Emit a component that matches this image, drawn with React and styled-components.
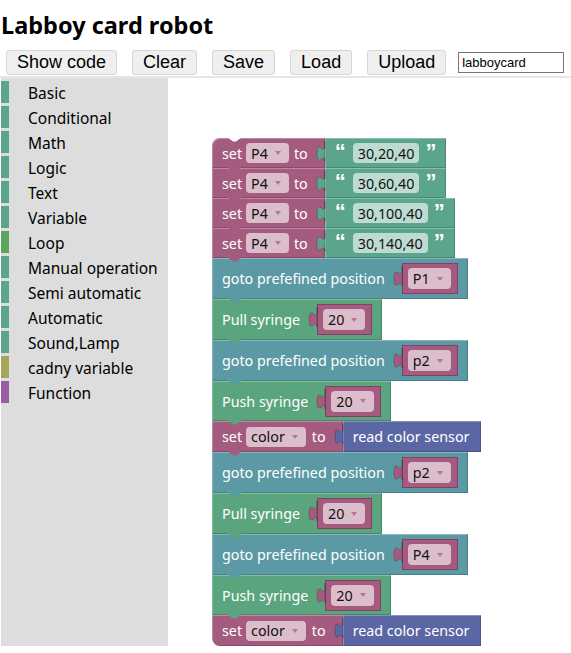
import React from "react";
import styled, { createGlobalStyle } from "styled-components";

const PINK = "#a55b80";
const TEXT_GREEN = "#5ba58c";
const ACTION_GREEN = "#5ba57e";
const TEAL = "#5b9aa5";
const BLUE = "#5b67a5";

const GlobalStyle = createGlobalStyle`
  html, body {
    margin: 0;
    padding: 0;
    background: #fff;
  }
  body {
    font-family: "Noto Sans", "Liberation Sans", sans-serif;
  }
`;

const Page = styled.div`
  width: 571px;
  height: 653px;
  overflow: hidden;
  display: flex;
  flex-direction: column;
`;

const Title = styled.h1`
  margin: 11px 0 0 1px;
  font-size: 23.5px;
  line-height: 29px;
  font-weight: 700;
  color: #000;
`;

const Toolbar = styled.div`
  display: flex;
  align-items: center;
  gap: 15px;
  margin-top: 10px;
  padding-left: 6px;
  height: 25px;
`;

const Button = styled.button`
  height: 25px;
  padding: 0 10px;
  font-family: "Liberation Sans", Arial, sans-serif;
  font-size: 18px;
  color: #000;
  background: #efefef;
  border: 1px solid #d6d6d6;
  border-radius: 3px;
`;

const NameInput = styled.input`
  width: 106px;
  height: 21px;
  box-sizing: border-box;
  margin-left: -3px;
  padding: 0 3px;
  font-family: "Liberation Sans", Arial, sans-serif;
  font-size: 13px;
  border: 1px solid #767676;
`;

const Workspace = styled.div`
  flex: 1;
  display: flex;
  margin-top: 1px;
  border-top: 2px solid #e6e6e6;
`;

const Toolbox = styled.div`
  width: 167px;
  height: 568px;
  margin-left: 1px;
  padding-top: 3px;
  box-sizing: border-box;
  background: #dddddd;
`;

const Category = styled.div`
  display: flex;
  height: 25px;
`;

const Swatch = styled.span`
  width: 8px;
  height: 22px;
  background: ${(p) => p.$c};
`;

const CategoryLabel = styled.span`
  margin: 1px 0 0 19px;
  font-size: 15.5px;
  line-height: 22px;
  color: #000;
`;

const Canvas = styled.div`
  flex: 1;
  padding: 60px 0 0 44px;
`;

const Stack = styled.div`
  display: flex;
  flex-direction: column;
  align-items: flex-start;
`;

const Row = styled.div`
  display: flex;
  height: ${(p) => p.$h}px;
`;

const Block = styled.div`
  position: relative;
  display: flex;
  align-items: center;
  box-sizing: border-box;
  height: 100%;
  padding: 0 ${(p) => p.$pr ?? 10}px 0 10px;
  background: ${(p) => p.$c};
  color: #fff;
  font-size: 14.3px;
  white-space: nowrap;
  box-shadow: inset 1px 1px 0 rgba(255, 255, 255, 0.28),
    inset -1px -1px 0 rgba(0, 0, 0, 0.18);
  border-top-left-radius: ${(p) => (p.$first ? 8 : 0)}px;
  border-bottom-left-radius: ${(p) => (p.$last ? 8 : 0)}px;
`;

const Word = styled.span`
  margin-right: ${(p) => p.$mr ?? 0}px;
`;

const Dropdown = styled.span`
  display: flex;
  align-items: center;
  height: ${(p) => p.$h ?? 20}px;
  padding: 0 8px 0 5px;
  margin-right: ${(p) => p.$mr ?? 0}px;
  border-radius: 4px;
  background: rgba(255, 255, 255, 0.6);
  color: #111;
`;

const Arrow = styled.span`
  width: 0;
  height: 0;
  margin-left: 7px;
  border-left: 3px solid transparent;
  border-right: 3px solid transparent;
  border-top: 4px solid #b07893;
`;

const Quote = styled.span`
  font-family: "Liberation Sans", Arial, sans-serif;
  font-size: 22px;
  font-weight: 700;
  line-height: 1;
  margin-top: -2px;
`;

const TextField = styled.span`
  display: flex;
  align-items: center;
  height: 20px;
  margin: 0 6px 0 7px;
  padding: 0 5px;
  border-radius: 4px;
  background: rgba(255, 255, 255, 0.6);
  color: #111;
`;

const Slot = styled.div`
  position: relative;
  display: flex;
  align-items: center;
  box-sizing: border-box;
  height: 31px;
  margin-left: 17px;
  padding: 0 6px 0 5px;
  background: ${PINK};
  border: 1px solid #7f4263;
`;

const TabSvg = styled.svg`
  position: absolute;
  left: ${(p) => p.$left ?? -8}px;
  top: ${(p) => p.$top ?? 3}px;
  overflow: visible;
`;

const NotchSvg = styled.svg`
  position: absolute;
  left: 15px;
  z-index: 2;
  ${(p) => (p.$top ? "top: -1px;" : "bottom: -4px;")}
`;

const Tab = ({ color, left, top }) => (
  <TabSvg width="8" height="20" viewBox="-8 0 8 20" $left={left} $top={top}>
    <path
      d="M0,0 V5 C0,15 -8,-3 -8,12.5 S0,10 0,20 Z"
      fill={color}
      stroke="rgba(0,0,0,0.25)"
      strokeWidth="0.8"
    />
  </TabSvg>
);

const Notch = ({ color, top }) => (
  <NotchSvg width="15" height="5" viewBox="0 0 15 5" $top={top}>
    <path d="M0,0 L6,4.5 H9 L15,0 Z" fill={color} />
  </NotchSvg>
);

const categories = [
  ["Basic", "#5ba58c"],
  ["Conditional", "#5ba58c"],
  ["Math", "#5ba58c"],
  ["Logic", "#5ba58c"],
  ["Text", "#5ba58c"],
  ["Variable", "#5ba58c"],
  ["Loop", "#5ba55b"],
  ["Manual operation", "#5ba58c"],
  ["Semi automatic", "#5ba58c"],
  ["Automatic", "#5ba58c"],
  ["Sound,Lamp", "#5ba58c"],
  ["cadny variable", "#a5a55b"],
  ["Function", "#995ba5"],
];

const SetText = ({ value, first }) => (
  <Row $h={30}>
    <Block $c={PINK} $pr={17} $first={first}>
      {first && <Notch color="#fff" top />}
      <Word $mr={4}>set</Word>
      <Dropdown $mr={5}>
        P4
        <Arrow />
      </Dropdown>
      <Word>to</Word>
      <Notch color={PINK} />
    </Block>
    <Block $c={TEXT_GREEN}>
      <Tab color={TEXT_GREEN} />
      <Quote>“</Quote>
      <TextField>{value}</TextField>
      <Quote>”</Quote>
    </Block>
  </Row>
);

const Goto = ({ pos }) => (
  <Row $h={41}>
    <Block $c={TEAL}>
      goto prefefined position
      <Slot>
        <Tab color={PINK} left={-9} top={2} />
        <Dropdown $h={21}>
          {pos}
          <Arrow />
        </Dropdown>
      </Slot>
      <Notch color={TEAL} />
    </Block>
  </Row>
);

const Syringe = ({ label, h }) => (
  <Row $h={h}>
    <Block $c={ACTION_GREEN}>
      {label}
      <Slot>
        <Tab color={PINK} left={-9} top={2} />
        <Dropdown $h={21}>
          20
          <Arrow />
        </Dropdown>
      </Slot>
      <Notch color={ACTION_GREEN} />
    </Block>
  </Row>
);

const SetColor = ({ last }) => (
  <Row $h={31}>
    <Block $c={PINK} $pr={17} $last={last}>
      <Word $mr={4}>set</Word>
      <Dropdown $mr={6}>
        color
        <Arrow />
      </Dropdown>
      <Word>to</Word>
      {!last && <Notch color={PINK} />}
    </Block>
    <Block $c={BLUE} $pr={11}>
      <Tab color={BLUE} />
      read color sensor
    </Block>
  </Row>
);

export default function App() {
  return (
    <Page>
      <GlobalStyle />
      <Title>Labboy card robot</Title>
      <Toolbar>
        <Button>Show code</Button>
        <Button>Clear</Button>
        <Button>Save</Button>
        <Button>Load</Button>
        <Button>Upload</Button>
        <NameInput defaultValue="labboycard" />
      </Toolbar>
      <Workspace>
        <Toolbox>
          {categories.map(([name, color]) => (
            <Category key={name}>
              <Swatch $c={color} />
              <CategoryLabel>{name}</CategoryLabel>
            </Category>
          ))}
        </Toolbox>
        <Canvas>
          <Stack>
            <SetText value="30,20,40" first />
            <SetText value="30,60,40" />
            <SetText value="30,100,40" />
            <SetText value="30,140,40" />
            <Goto pos="P1" />
            <Syringe label="Pull syringe" h={41} />
            <Goto pos="p2" />
            <Syringe label="Push syringe" h={40} />
            <SetColor />
            <Goto pos="p2" />
            <Syringe label="Pull syringe" h={41} />
            <Goto pos="P4" />
            <Syringe label="Push syringe" h={40} />
            <SetColor last />
          </Stack>
        </Canvas>
      </Workspace>
    </Page>
  );
}
